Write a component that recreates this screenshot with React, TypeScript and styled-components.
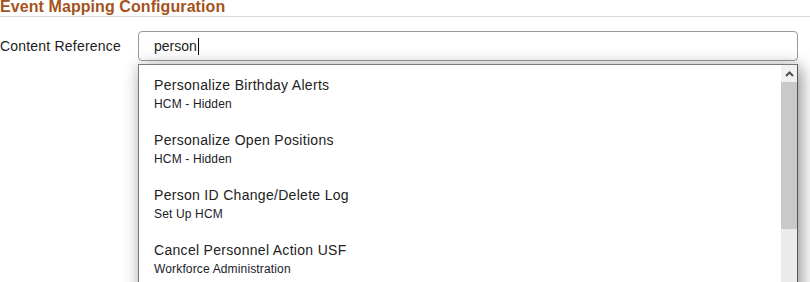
import React from 'react';
import styled, { createGlobalStyle } from 'styled-components';

const GlobalStyle = createGlobalStyle`
  html, body {
    margin: 0;
    padding: 0;
    background: #ffffff;
    overflow: hidden;
  }
  body {
    font-family: 'Liberation Sans', Arial, sans-serif;
    color: #222;
  }
`;

const Page = styled.div`
  width: 810px;
  height: 282px;
  overflow: hidden;
`;

const PageTitle = styled.h1`
  margin: 0;
  padding: 0 0 2px 0;
  font-size: 16px;
  line-height: 14px;
  font-weight: 700;
  letter-spacing: 0.08px;
  color: #a4531c;
  border-bottom: 1px solid #d9d9d9;
`;

const FieldRow = styled.div`
  display: flex;
  align-items: center;
  margin-top: 14px;
`;

const Label = styled.label`
  width: 138px;
  font-size: 14px;
  letter-spacing: 0.2px;
  color: #222;
`;

const FieldWrap = styled.div`
  position: relative;
  width: 660px;
`;

const SearchBox = styled.div`
  box-sizing: border-box;
  height: 30px;
  border: 1px solid #9a9a9a;
  border-radius: 4px;
  padding: 0 15px;
  display: flex;
  align-items: center;
  font-size: 14px;
  color: #222;
  background: #fff;
`;

const Caret = styled.span`
  display: inline-block;
  width: 1px;
  height: 17px;
  margin-left: 1px;
  background: #000;
`;

const Dropdown = styled.div`
  position: absolute;
  top: 33px;
  left: 0;
  width: 660px;
  height: 240px;
  box-sizing: border-box;
  border: 1px solid #7a7a7a;
  border-right-color: #555;
  background: #fff;
  display: flex;
  box-shadow: 3px 3px 16px rgba(0, 0, 0, 0.45);
`;

const OptionList = styled.ul`
  list-style: none;
  margin: 0;
  padding: 0;
  flex: 1;
`;

const Option = styled.li`
  padding: 12px 15px 9px;
`;

const OptionTitle = styled.div`
  font-size: 14px;
  line-height: 16px;
  letter-spacing: 0.3px;
  color: #222;
`;

const OptionPath = styled.div`
  margin-top: 4px;
  font-size: 12px;
  line-height: 14px;
  letter-spacing: 0.15px;
  color: #1a1a2a;
`;

const ScrollBar = styled.div`
  width: 16px;
  display: flex;
  flex-direction: column;
  background: #ebebeb;
`;

const ScrollArrow = styled.div`
  height: 17px;
  background: #f1f1f1;
  display: flex;
  align-items: center;
  justify-content: center;
`;

const ScrollThumb = styled.div<{ size: number }>`
  height: ${({ size }) => `${size}px`};
  background: #c9c9c9;
`;

const OPTIONS = [
  { title: 'Personalize Birthday Alerts', path: 'HCM - Hidden' },
  { title: 'Personalize Open Positions', path: 'HCM - Hidden' },
  { title: 'Person ID Change/Delete Log', path: 'Set Up HCM' },
  { title: 'Cancel Personnel Action USF', path: 'Workforce Administration' },
];

const App = () => {
  return (
    <Page>
      <GlobalStyle />
      <PageTitle>Event Mapping Configuration</PageTitle>
      <FieldRow>
        <Label>Content Reference</Label>
        <FieldWrap>
          <SearchBox>
            person
            <Caret />
          </SearchBox>
          <Dropdown>
            <OptionList>
              {OPTIONS.map((opt) => (
                <Option key={opt.title}>
                  <OptionTitle>{opt.title}</OptionTitle>
                  <OptionPath>{opt.path}</OptionPath>
                </Option>
              ))}
            </OptionList>
            <ScrollBar>
              <ScrollArrow>
                <svg width="9" height="6" viewBox="0 0 9 6">
                  <path d="M1 5 L4.5 1.5 L8 5" fill="none" stroke="#505050" strokeWidth="2" />
                </svg>
              </ScrollArrow>
              <ScrollThumb size={147} />
            </ScrollBar>
          </Dropdown>
        </FieldWrap>
      </FieldRow>
    </Page>
  );
};

export default App;
